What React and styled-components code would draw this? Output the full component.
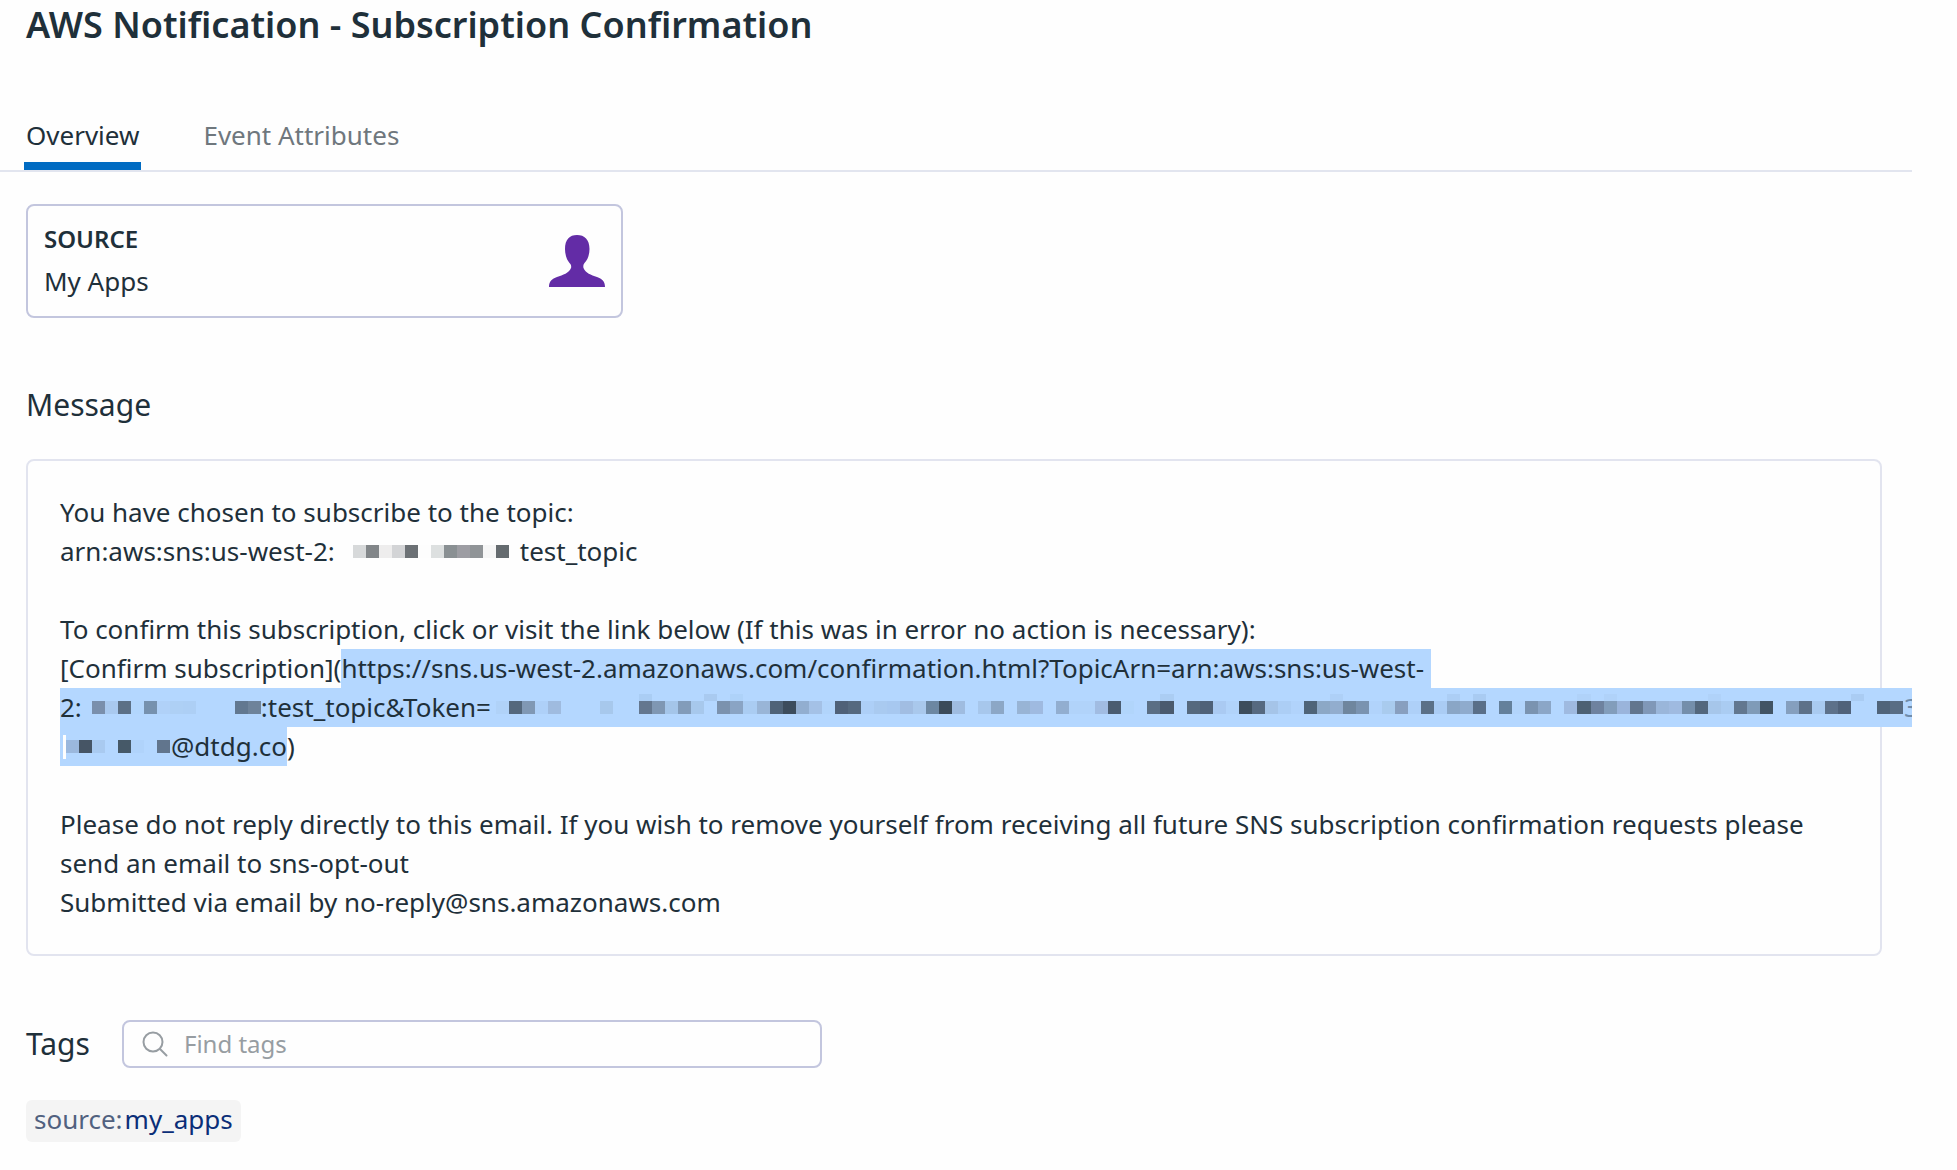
import React from "react";
import styled, { createGlobalStyle } from "styled-components";

const GlobalStyle = createGlobalStyle`
  *, *::before, *::after { box-sizing: border-box; }
  body {
    margin: 0;
    background: #fefefe;
    color: #1f303a;
    font-family: "Noto Sans", "Liberation Sans", sans-serif;
    font-size: 26px;
    line-height: 39px;
    overflow-x: hidden;
  }
  h1, h2, p { margin: 0; }
  button, input { font: inherit; color: inherit; }
`;

const Page = styled.div`
  padding: 0 45px 28px 0;
`;

const Title = styled.h1`
  padding-left: 26px;
  font-size: 36px;
  font-weight: 600;
  line-height: 50px;
`;

const Tabs = styled.nav`
  display: flex;
  gap: 60px;
  margin-top: 66px;
  padding-left: 24px;
  border-bottom: 2px solid #e2e5ef;
`;

const Tab = styled.button`
  padding: 0 2px 7px;
  border: 0;
  border-bottom: 8px solid ${(p) => (p.$active ? "#006bc2" : "transparent")};
  background: none;
  color: ${(p) => (p.$active ? "#1f303a" : "#6f777d")};
  cursor: pointer;
`;

const Content = styled.main`
  padding: 32px 30px 0 26px;
`;

const SourceCard = styled.section`
  display: flex;
  align-items: center;
  justify-content: space-between;
  max-width: 597px;
  height: 114px;
  padding: 0 16px;
  border: 2px solid #c3c6de;
  border-radius: 8px;
  line-height: 43px;
`;

const SourceText = styled.div`
  padding-bottom: 2px;
`;

const SourceLabel = styled.p`
  font-size: 24px;
  font-weight: 600;
`;

const UserIcon = styled.svg`
  width: 56px;
  height: 52px;
  fill: #632ca6;
`;

const Heading = styled.h2`
  font-size: 30px;
  font-weight: 400;
  line-height: 40px;
`;

const MessageSection = styled.section`
  display: flex;
  flex-direction: column;
  gap: 34px;
  margin-top: 67px;
`;

const MessageCard = styled.div`
  display: flex;
  flex-direction: column;
  gap: 39px;
  padding: 32px;
  border: 2px solid #e2e4ef;
  border-radius: 8px;
`;

const Line = styled.div`
  display: flex;
  align-items: center;
  white-space: nowrap;
  margin-right: ${(p) => (p.$bleed ? "-64px" : "0")};
`;

const Selected = styled.span`
  display: flex;
  flex: ${(p) => (p.$fill ? "1" : "none")};
  align-items: center;
  min-width: 0;
  padding-right: ${(p) => (p.$trail ? "7px" : "0")};
  background: #b4d7ff;
`;

const Mosaic = styled.span`
  display: flex;
  flex: ${(p) => (p.$fill ? "1" : "none")};
  min-width: 0;
  margin-left: ${(p) => p.$before || 0}px;
  margin-right: ${(p) => p.$after || 0}px;
`;

const Cell = styled.span`
  flex: 1 1 13px;
  width: 13px;
  min-width: 0;
  height: 27px;
  border-top: 7px solid ${(p) => p.$top || "transparent"};
  border-bottom: 7px solid transparent;
  background: ${(p) => p.$color || "transparent"} padding-box;
`;

const Caret = styled.span`
  width: 3px;
  height: 24px;
  margin-left: 3px;
  background: #fefefe;
`;

const ClippedDigit = styled.span`
  width: 8px;
  overflow: hidden;
  color: #6f8cab;
`;

const TagsRow = styled.section`
  display: flex;
  align-items: center;
  gap: 32px;
  margin-top: 64px;
`;

const SearchBox = styled.div`
  display: flex;
  flex: 0 1 700px;
  align-items: center;
  gap: 16px;
  height: 48px;
  padding: 0 18px;
  border: 2px solid #c3c6de;
  border-radius: 8px;
`;

const SearchIcon = styled.svg`
  flex: none;
  width: 26px;
  height: 26px;
  fill: none;
  stroke: #979da2;
  stroke-width: 2;
  stroke-linecap: round;
`;

const SearchInput = styled.input`
  flex: 1;
  min-width: 0;
  padding: 0 0 2px;
  border: 0;
  outline: 0;
  background: none;
  font-size: 24px;
  line-height: 39px;
  &::placeholder { color: #979da2; opacity: 1; }
`;

const Chip = styled.button`
  display: flex;
  gap: 2px;
  height: 42px;
  margin-top: 32px;
  padding: 0 8px;
  border: 0;
  border-radius: 6px;
  background: #f4f4f4;
  color: #51617f;
  cursor: pointer;
`;

const ChipValue = styled.span`
  color: #0b2e78;
`;

const TOPIC_CELLS =
  "d7d9da 828689 eeeded d3d4d6 6c7175 fdfdfd dde0e0 8a9093 9d9da3 909497 f6f6f6 656b6f";

const ACCOUNT_CELLS =
  "7a8fac a9c9ef 5c7086 b2d6fd 7691ae b0d1f8 aed0f5 adcff5 - - - 627890 6e839a";

// "-" leaves a cell empty; "a/b" adds a faint cap of colour b above colour a
const TOKEN_CELLS = [
  "b0d2f8 54687d 8098b4 aed0f8 9fbbdf - - - a7c8ec - - 64778f/aacdf4 7f97b3 a4c5e9",
  "829cba a7c8ec -/a9caf0 7b92ae 8aa4c4/aed2f9 aaccf2 99b5d7 4f6378 3c4c5c 92aed0 a4c1e6 b1d4fb",
  "4f6178 55697f adcff7 a9caf0 a7c8f0 a1bde2 a9c8ec 6c87a2 3b4b5a 9fbce0 - a7c7ec 8ca7c6 -",
  "98b4d5 9fbae0 - 92aed0 b1d3fa b1d3fa a1bce2 4a5c70 b1d5fb - 5a6e84 4a5a6e/abcdf3 - 55697e 4f6178",
  "aacaf2 b1d3fa 3d4d5c 566980 a5c4e8 accef5 b1d3fb 4f6478 8ca8c6 92adce/aed0f7 6f869e 7a93b0",
  "b1d3fb a9cbee 889fbf aed0f8 5b7087 aaccf4 8aa6c6/accef5 8fabcd 5a6f88/a9cbf2 - 64809b b2d4fb",
  "7a93b0 8ba6c7 - 9fbae0 4d6173/b0d2f9 6e829f 829dbb/b0d2f9 9ab4db 62768e 8098b8 9ab6da",
  "9fbae0 748eab 53677d a6c6ea/b0d2f9 aaccf2 62778f 7f9bb8 425464 - 859fbe 5d7189 a9caf0 5d718a",
  "50627a -/aaccf3 - 50647a 596d84",
].join(" ");

const USER_CELLS = "9bb8dd 465565 a9caf0 - 465968 b0d3fb - 61758d";

const toColor = (value) => (value && value !== "-" ? `#${value}` : undefined);

function Redaction({ cells, before, after, fill }) {
  return (
    <Mosaic $before={before} $after={after} $fill={fill} aria-hidden="true">
      {cells.split(" ").map((cell, i) => {
        const [color, top] = cell.split("/");
        return <Cell key={i} $color={toColor(color)} $top={toColor(top)} />;
      })}
    </Mosaic>
  );
}

export default function App() {
  return (
    <>
      <GlobalStyle />
      <Page>
        <Title>AWS Notification - Subscription Confirmation</Title>
        <Tabs>
          <Tab type="button" $active>Overview</Tab>
          <Tab type="button">Event Attributes</Tab>
        </Tabs>
        <Content>
          <SourceCard>
            <SourceText>
              <SourceLabel>SOURCE</SourceLabel>
              <p>My Apps</p>
            </SourceText>
            <UserIcon viewBox="0 0 56 52" aria-hidden="true">
              <path d="M0 52c0-6 3-8 8-10 6-2 12-4 14-9 .6-2-.3-4-1.500-5C17.500 24.500 16 19 16 14 16 4.500 20.500 0 28 0s12.500 4.500 12.500 14c0 5-1.500 10.500-5 14-1 1-1.500 3-1 5 2 5 7.500 7 13.500 9 5 2 8 4 8 10z" />
            </UserIcon>
          </SourceCard>

          <MessageSection>
            <Heading>Message</Heading>
            <MessageCard>
              <div>
                <p>You have chosen to subscribe to the topic:</p>
                <Line>
                  arn:aws:sns:us-west-2:
                  <Redaction cells={TOPIC_CELLS} before={18} after={11} />
                  test_topic
                </Line>
              </div>
              <div>
                <p>To confirm this subscription, click or visit the link below (If this was in error no action is necessary):</p>
                <Line>
                  [Confirm subscription](
                  <Selected $trail>
                    https://sns.us-west-2.amazonaws.com/confirmation.html?TopicArn=arn:aws:sns:us-west-
                  </Selected>
                </Line>
                <Line $bleed>
                  <Selected $fill>
                    2:
                    <Redaction cells={ACCOUNT_CELLS} before={10} />
                    :test_topic&amp;Token=
                    <Redaction cells={TOKEN_CELLS} before={5} fill />
                    <ClippedDigit>3</ClippedDigit>
                  </Selected>
                </Line>
                <Line>
                  <Selected>
                    <Caret />
                    <Redaction cells={USER_CELLS} after={1} />
                    @dtdg.co
                  </Selected>
                  )
                </Line>
              </div>
              <div>
                <p>
                  Please do not reply directly to this email. If you wish to remove yourself from receiving all future
                  SNS subscription confirmation requests please send an email to sns-opt-out
                </p>
                <p>Submitted via email by no-reply@sns.amazonaws.com</p>
              </div>
            </MessageCard>
          </MessageSection>

          <TagsRow>
            <Heading as="label" htmlFor="find-tags">Tags</Heading>
            <SearchBox>
              <SearchIcon viewBox="0 0 26 26" aria-hidden="true">
                <circle cx="11" cy="11" r="9.500" />
                <path d="M18 18l6.500 6.500" />
              </SearchIcon>
              <SearchInput id="find-tags" type="text" placeholder="Find tags" />
            </SearchBox>
          </TagsRow>
          <Chip type="button">
            source:<ChipValue>my_apps</ChipValue>
          </Chip>
        </Content>
      </Page>
    </>
  );
}
